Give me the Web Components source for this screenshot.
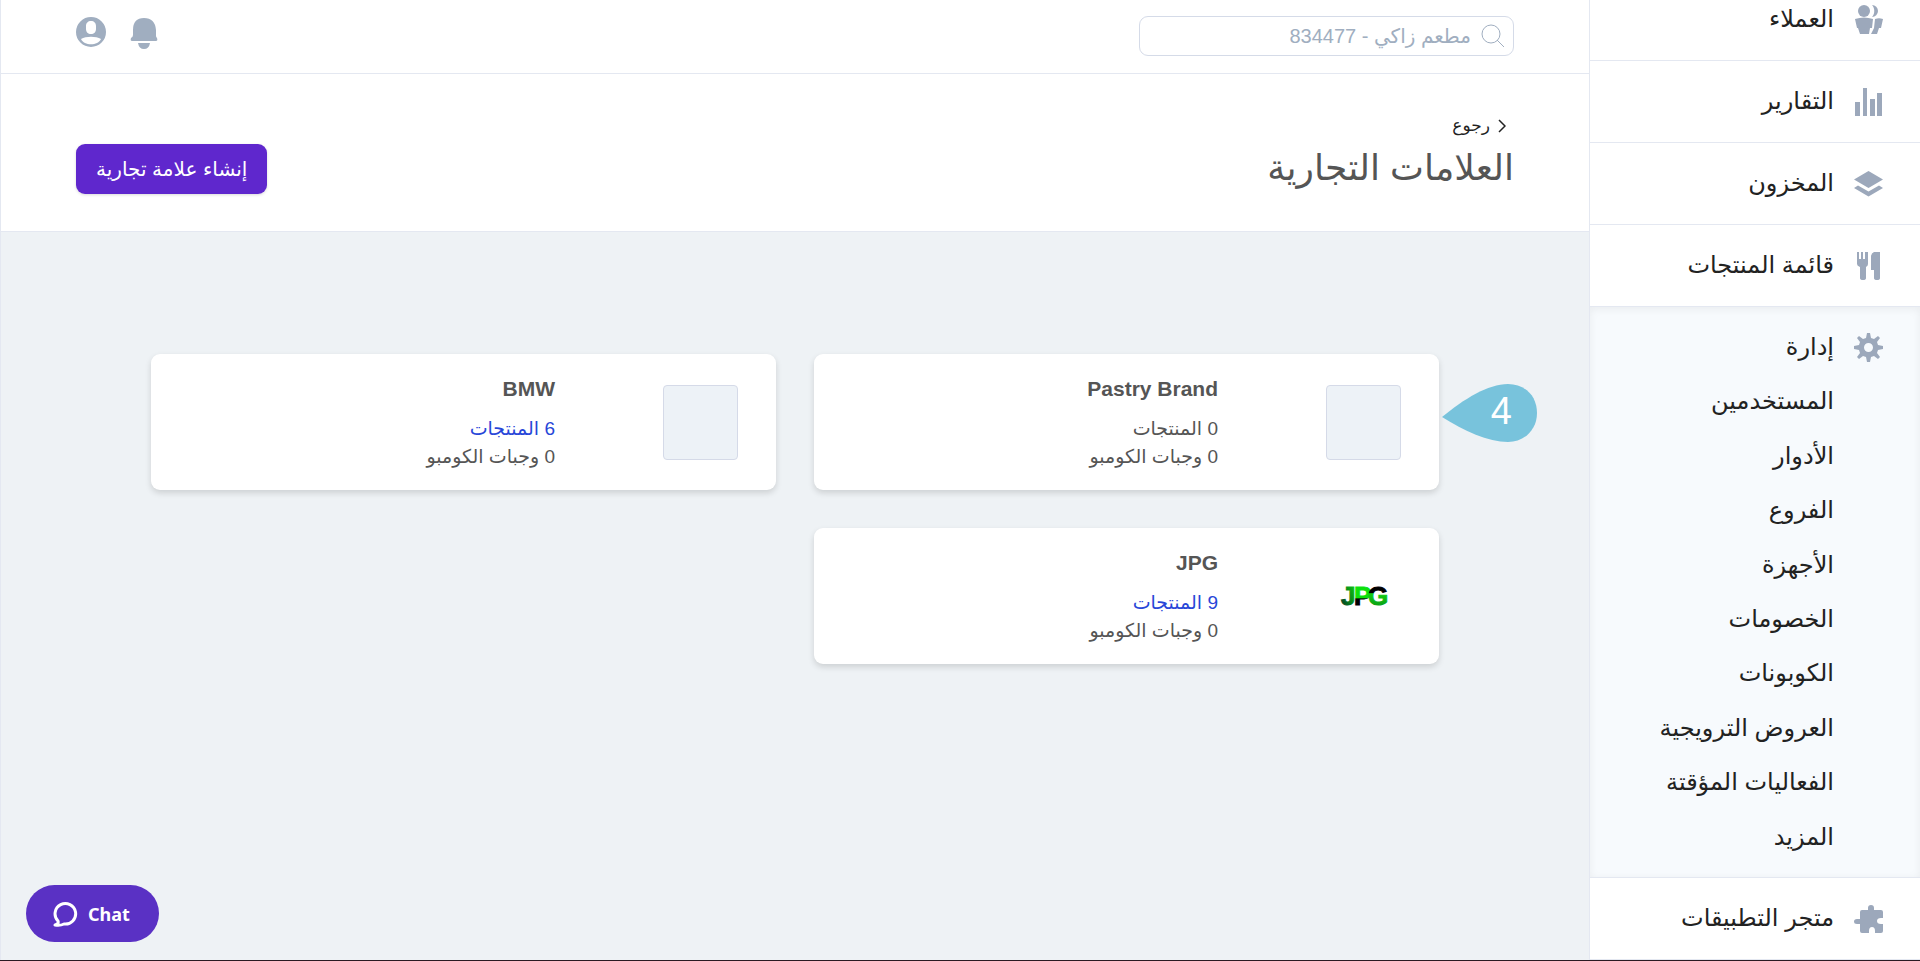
<!DOCTYPE html>
<html lang="ar" dir="rtl">
<head>
<meta charset="UTF-8">
<meta name="viewport" content="width=device-width, initial-scale=1">
<title>العلامات التجارية</title>
<style>
  :root {
    --line: #e4e8f1;
    --muted: #a0aec0;
    --text: #555;
    --purple: #5f27cd;
  }

  body {
    margin: 0;
    background-color: #eef2f5;
    color: #222;
    font: 19px/28px 'Liberation Sans', 'DejaVu Sans', sans-serif;
  }
</style>
</head>
<body>
<brands-app></brands-app>

<script>
const icons = {
  customers: `<circle cx="10" cy="6" r="6"/><path d="M18 0a6 6 0 1 1 0 12c3-3 3-9 0-12zM1 14c6-2 12-2 18 0l-1 9h-2l-1 6H6l-2-6H3zM21 14c3-1 5-1 8 0l-2 9h-2l-2 6h-6l3-6z"/>`,
  reports: `<path d="M1 15h5v14H1zM9 1h4v28H9zM16 12h5v17h-5zM23 6h5v23h-5z"/>`,
  stock: `<path d="M14.500 2 29 10.500 14.500 19 0 10.500zM4 16.500l10.500 6 10.500-6 4 2.500-14.500 8.500L0 19z"/>`,
  menu: `<path d="M3 1h2v7h2V1h2v7h2V1h3v12q0 2-2 3v11q0 2-3 2t-3-2V16q-3-1-3-3zM20 1h6v26q0 2-3 2t-3-2v-8h-3V6q0-4 3-5z"/>`,
  manage: `<path fill-rule="evenodd" d="M13 0h3l1 5 3 1 4-3 2 2-3 4 1 3 5 1v3l-5 1-1 3 3 4-2 2-4-3-3 1-1 5h-3l-1-5-3-1-4 3-2-2 3-4-1-3-5-1v-3l5-1 1-3-3-4 2-2 4 3 3-1zM14.500 10a4.500 4.500 0 1 0 0 9 4.500 4.500 0 0 0 0-9z"/>`,
  apps: `<path d="M6 8q0-2 2-2h6V4q0-3 3-3t3 3v2h7q2 0 2 2v6h-2q-4 0-4 3t4 3h2v7q0 2-2 2h-6v-2q0-4-3-4t-3 4v2H8q-2 0-2-2v-7H3q-3 0-3-2.500T3 15h3z"/>`,
};

class NavItem extends HTMLElement {
  constructor() {
    super();
    this.attachShadow({ mode: 'open' });
  }

  connectedCallback() {
    this.shadowRoot.innerHTML = `
      <style>
        :host {
          display: block;
        }
        a {
          display: flex;
          align-items: center;
          gap: 20px;
          padding-inline: 37px 20px;
          height: var(--nav-height, 81px);
          color: inherit;
          text-decoration: none;
          font-size: 24px;
          line-height: 34px;
        }
        span {
          padding-bottom: 2px;
        }
        svg {
          width: 29px;
          height: 30px;
          fill: #9ca8bb;
          flex: none;
        }
      </style>
      <a href="#">
        <svg viewBox="0 0 29 30" aria-hidden="true">${icons[this.getAttribute('icon')]}</svg>
        <span><slot></slot></span>
      </a>
    `;
  }
}
customElements.define('nav-item', NavItem);

class NavGroup extends HTMLElement {
  constructor() {
    super();
    this.attachShadow({ mode: 'open' });
    this.shadowRoot.innerHTML = `
      <style>
        :host {
          display: block;
          padding-bottom: 13px;
          background-color: #f7fafd;
          box-shadow: inset 0 2px 8px rgba(0, 0, 0, 0.06);
          --nav-height: 67px;
        }
        .head {
          padding-top: 7px;
          margin-bottom: -7px;
        }
        .links {
          display: grid;
          grid-auto-rows: 1fr;
          align-items: center;
          height: 490px;
          padding-inline-start: 86px;
        }
        ::slotted(a) {
          color: inherit;
          text-decoration: none;
          font-size: 24px;
          line-height: 34px;
        }
      </style>
      <div class="head"><slot name="head"></slot></div>
      <div class="links"><slot></slot></div>
    `;
  }
}
customElements.define('nav-group', NavGroup);

class SideBar extends HTMLElement {
  constructor() {
    super();
    this.attachShadow({ mode: 'open' });
    this.shadowRoot.innerHTML = `
      <style>
        :host {
          display: block;
          width: 330px;
          flex: none;
          background-color: #fff;
          border-inline-end: 1px solid var(--line);
          overflow: hidden;
        }
        nav {
          display: flex;
          flex-direction: column;
          justify-content: flex-end;
          height: 100%;
        }
        nav > * {
          flex: none;
          border-bottom: 1px solid var(--line);
        }
      </style>
      <nav>
        <nav-item icon="customers">العملاء</nav-item>
        <nav-item icon="reports">التقارير</nav-item>
        <nav-item icon="stock">المخزون</nav-item>
        <nav-item icon="menu">قائمة المنتجات</nav-item>
        <nav-group>
          <nav-item slot="head" icon="manage">إدارة</nav-item>
          <a href="#">المستخدمين</a>
          <a href="#">الأدوار</a>
          <a href="#">الفروع</a>
          <a href="#">الأجهزة</a>
          <a href="#">الخصومات</a>
          <a href="#">الكوبونات</a>
          <a href="#">العروض الترويجية</a>
          <a href="#">الفعاليات المؤقتة</a>
          <a href="#">المزيد</a>
        </nav-group>
        <nav-item icon="apps">متجر التطبيقات</nav-item>
      </nav>
    `;
  }
}
customElements.define('side-bar', SideBar);

class TopBar extends HTMLElement {
  constructor() {
    super();
    this.attachShadow({ mode: 'open' });
    this.shadowRoot.innerHTML = `
      <style>
        :host {
          display: flex;
          justify-content: space-between;
          align-items: center;
          height: 71px;
          padding: 0 75px 2px;
          background-color: #fff;
          border-bottom: 1px solid var(--line);
        }
        label {
          display: flex;
          align-items: center;
          gap: 10px;
          width: 375px;
          height: 40px;
          box-sizing: border-box;
          padding-inline: 8px;
          border: 1px solid #d5dbe8;
          border-radius: 9px;
        }
        input {
          flex: 1;
          min-width: 0;
          padding: 0;
          border: 0;
          outline: 0;
          background: none;
          font: inherit;
          font-size: 20px;
          color: var(--muted);
        }
        .actions {
          display: flex;
          gap: 24px;
          padding-bottom: 6px;
        }
        button {
          display: flex;
          padding: 0;
          border: 0;
          background: none;
          color: var(--muted);
        }
      </style>
      <label>
        <svg width="24" height="24" viewBox="0 0 24 24" fill="none" stroke="#a0aec0" aria-hidden="true">
          <circle cx="10" cy="10" r="9"/><path d="m16 16 7 7"/>
        </svg>
        <input type="text" value="مطعم زاكي - 834477" aria-label="بحث">
      </label>
      <div class="actions">
        <button type="button" aria-label="الإشعارات">
          <svg width="28" height="32" viewBox="0 0 28 32" fill="currentColor">
            <path d="M3 13Q3 1 14 1t12 12v6q0 1 1 2 1 3-1 3H2q-2 0-1-3 2-1 2-3zM8 26h12q-1 6-6 6t-6-6z"/>
          </svg>
        </button>
        <button type="button" aria-label="الحساب">
          <svg width="30" height="30" viewBox="0 0 30 30" fill="currentColor">
            <path fill-rule="evenodd" d="M15 0a15 15 0 1 1 0 30 15 15 0 0 1 0-30zM15 4c-3 0-5 2-5 5v3c0 3 2 5 5 5s5-2 5-5V9c0-3-2-5-5-5zM5 22c3 7 17 7 20 0-5-3-15-3-20 0z"/>
          </svg>
        </button>
      </div>
    `;
  }
}
customElements.define('top-bar', TopBar);

class PageHeader extends HTMLElement {
  constructor() {
    super();
    this.attachShadow({ mode: 'open' });
    this.shadowRoot.innerHTML = `
      <style>
        :host {
          display: flex;
          justify-content: space-between;
          align-items: center;
          padding: 38px 75px 35px;
          background-color: #fff;
          border-bottom: 1px solid var(--line);
        }
        a {
          display: flex;
          align-items: center;
          gap: 8px;
          padding-inline-start: 8px;
          color: inherit;
          font-size: 17px;
          text-decoration: none;
        }
        h1 {
          margin: 0;
          color: var(--text);
          font-size: 36px;
          line-height: 56px;
          font-weight: 400;
        }
        ::slotted(button) {
          height: 50px;
          margin-top: 30px;
          padding: 0 20px;
          border: 0;
          border-radius: 9px;
          background-color: var(--purple);
          box-shadow: 0 1px 3px rgba(0, 0, 0, 0.15);
          color: #fff;
          font: inherit;
          font-size: 20px;
        }
      </style>
      <div>
        <a href="#">
          <svg width="8" height="14" viewBox="0 0 8 14" fill="none" stroke="currentColor" stroke-width="1.500" aria-hidden="true"><path d="m1 1 6 6-6 6"/></svg>
          رجوع
        </a>
        <h1><slot></slot></h1>
      </div>
      <slot name="action"></slot>
    `;
  }
}
customElements.define('page-header', PageHeader);

class BrandCard extends HTMLElement {
  constructor() {
    super();
    this.attachShadow({ mode: 'open' });
  }

  connectedCallback() {
    const products = this.getAttribute('products');
    const label = `${products} المنتجات`;
    this.shadowRoot.innerHTML = `
      <style>
        :host {
          display: flex;
          align-items: center;
          gap: 108px;
          position: relative;
          height: 136px;
          box-sizing: border-box;
          padding-inline: 38px;
          border-radius: 9px;
          background-color: #fff;
          box-shadow: 0 3px 6px rgba(0, 0, 0, 0.14);
          color: var(--text);
        }
        .thumb {
          display: flex;
          align-items: center;
          justify-content: center;
          width: 75px;
          height: 75px;
          flex: none;
          box-sizing: border-box;
        }
        .thumb.empty {
          border: 1px solid #d5dae8;
          border-radius: 4px;
          background-color: #edf2f7;
        }
        .info {
          padding-top: 2px;
        }
        h2 {
          margin: 0 0 12px;
          font-size: 21px;
          line-height: 28px;
          font-weight: 700;
        }
        p {
          margin: 0;
        }
        a {
          color: #2746d8;
          text-decoration: none;
        }
      </style>
      <div class="thumb ${this.querySelector('[slot=logo]') ? '' : 'empty'}"><slot name="logo"></slot></div>
      <div class="info">
        <h2>${this.getAttribute('name')}</h2>
        <p>${products > 0 ? `<a href="#">${label}</a>` : label}</p>
        <p>0 وجبات الكومبو</p>
      </div>
      <slot></slot>
    `;
  }
}
customElements.define('brand-card', BrandCard);

class JpgLogo extends HTMLElement {
  constructor() {
    super();
    this.attachShadow({ mode: 'open' });
    this.shadowRoot.innerHTML = `
      <style>
        :host {
          display: flex;
        }
        text {
          font: 700 26px 'Liberation Sans', sans-serif;
          stroke-width: 1;
        }
      </style>
      <svg width="56" height="40" viewBox="-4 -8 56 40" direction="ltr" role="img" aria-label="JPG">
        <defs>
          <linearGradient id="j" x1="0" y1="1" x2="1" y2="0"><stop offset=".2" stop-color="#054d22"/><stop offset="1" stop-color="#0dde0d"/></linearGradient>
          <linearGradient id="p" x1="0" y1="0" x2="0" y2="1"><stop offset=".55" stop-color="#0ce00c"/><stop offset=".6" stop-color="#000"/></linearGradient>
          <linearGradient id="g" x1="0" y1="0" x2="0" y2="1"><stop offset=".4" stop-color="#000"/><stop offset=".42" stop-color="#12d012"/><stop offset="1" stop-color="#078a18"/></linearGradient>
        </defs>
        <text x="1" y="21" fill="url(#j)" stroke="url(#j)">J</text>
        <text x="14" y="21" fill="url(#p)" stroke="url(#p)">P</text>
        <text x="28" y="21" fill="url(#g)" stroke="url(#g)">G</text>
      </svg>
    `;
  }
}
customElements.define('jpg-logo', JpgLogo);

// Numbered drop-shaped pointer that sits beside a card
class StepMarker extends HTMLElement {
  constructor() {
    super();
    this.attachShadow({ mode: 'open' });
    this.shadowRoot.innerHTML = `
      <style>
        :host {
          position: absolute;
          top: 29px;
          left: calc(100% + 3px);
          display: grid;
          width: 96px;
          height: 60px;
          color: #fff;
          font-size: 38px;
          line-height: 56px;
        }
        svg, span {
          grid-area: 1 / 1;
        }
        span {
          padding-inline-start: 26px;
        }
      </style>
      <svg width="96" height="60" viewBox="0 0 96 60" fill="#78c3dc" aria-hidden="true">
        <path d="M0 34C22 16 46 1 66 1c17 0 29 12 29 29S82 59 66 59C46 59 22 48 0 34z"/>
      </svg>
      <span><slot></slot></span>
    `;
  }
}
customElements.define('step-marker', StepMarker);

class ChatButton extends HTMLElement {
  constructor() {
    super();
    this.attachShadow({ mode: 'open' });
    this.shadowRoot.innerHTML = `
      <style>
        :host {
          position: fixed;
          left: 26px;
          bottom: 19px;
        }
        button {
          display: flex;
          align-items: center;
          gap: 10px;
          height: 57px;
          padding: 0 29px 0 26px;
          border: 0;
          border-radius: 29px;
          background-color: #5a31c4;
          color: #fff;
          font: 700 18px/28px 'Noto Sans', sans-serif;
        }
      </style>
      <button type="button" dir="ltr">
        <svg width="26" height="26" viewBox="0 0 26 26" fill="none" stroke="#fff" stroke-width="3" stroke-linejoin="round" aria-hidden="true">
          <path d="M6 20a10.300 10.300 0 1 1 6 3q-4 2-9 1 4-1 3-4z"/>
        </svg>
        Chat
      </button>
    `;
  }
}
customElements.define('chat-button', ChatButton);

class BrandsApp extends HTMLElement {
  constructor() {
    super();
    this.attachShadow({ mode: 'open' });
    this.shadowRoot.innerHTML = `
      <style>
        :host {
          display: flex;
          height: 100vh;
          box-sizing: border-box;
          border-bottom: 1px solid #2a1a22;
          overflow: hidden;
        }
        main {
          flex: 1;
          min-width: 0;
          border-inline-end: 1px solid var(--line);
        }
        section {
          display: grid;
          grid-template-columns: 1fr 1fr;
          gap: 38px;
          padding: 122px 150px 38px;
        }
      </style>
      <side-bar></side-bar>
      <main>
        <top-bar></top-bar>
        <page-header>
          العلامات التجارية
          <button slot="action" type="button">إنشاء علامة تجارية</button>
        </page-header>
        <section>
          <brand-card name="Pastry Brand" products="0"><step-marker>4</step-marker></brand-card>
          <brand-card name="BMW" products="6"></brand-card>
          <brand-card name="JPG" products="9"><jpg-logo slot="logo"></jpg-logo></brand-card>
        </section>
      </main>
      <chat-button></chat-button>
    `;
  }
}
customElements.define('brands-app', BrandsApp);
</script>
</body>
</html>
